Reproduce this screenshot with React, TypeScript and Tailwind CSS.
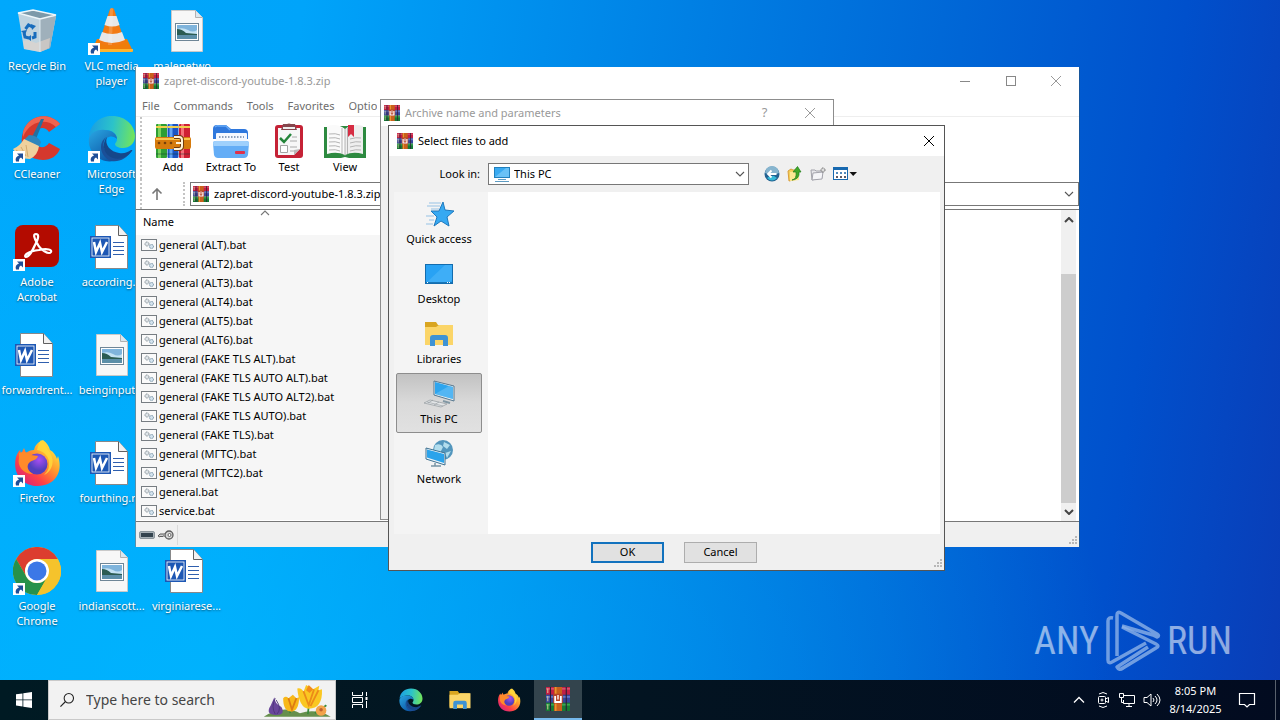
import React from 'react';

type IconProps = { className?: string };

const WinRarIcon: React.FC<IconProps> = ({ className = 'h-4 w-4' }) => (
  <svg viewBox="0 0 16 16" className={className} aria-hidden="true">
    <rect x="0" y="0" width="16" height="5.2" fill="#c21f45" />
    <rect x="0" y="0.6" width="16" height="1.2" fill="#d8506c" />
    <rect x="0" y="5.2" width="16" height="5.3" fill="#37459c" />
    <rect x="0" y="6" width="16" height="1.2" fill="#6076c4" />
    <rect x="0" y="10.5" width="16" height="5.5" fill="#167a35" />
    <rect x="0" y="11.2" width="16" height="1.2" fill="#3ba552" />
    <path d="M3 0v16M13.5 0v16" stroke="#2c1a34" strokeWidth="0.7" />
    <path d="M1.2 1v3M1.2 6v3.5M1.2 11.5V15" stroke="#e9d7a0" strokeWidth="0.6" />
    <rect x="5.3" y="0" width="5.4" height="16" fill="#c9601c" />
    <rect x="6" y="0" width="1" height="16" fill="#e8962f" />
    <rect x="4.8" y="4.500" width="6.4" height="6.500" rx="0.8" fill="#b84326" />
    <path d="M6.1 6v4h3.8V6" fill="none" stroke="#fff" strokeWidth="1.2" />
    <path d="M8 5.4v3" stroke="#fff" strokeWidth="0.9" />
  </svg>
);

const AddIcon = () => (
  <svg viewBox="0 0 36 36" className="h-9 w-9" aria-hidden="true">
    <rect x="1" y="1" width="11" height="34" rx="1" fill="#2e9e35" />
    <rect x="3" y="1" width="3" height="34" fill="#79d35c" />
    <rect x="12.500" y="1" width="11" height="34" rx="1" fill="#1c55c4" />
    <rect x="14.500" y="1" width="3" height="34" fill="#62a4f4" />
    <rect x="24" y="1" width="11" height="34" rx="1" fill="#cf2034" />
    <rect x="26" y="1" width="3" height="34" fill="#f57079" />
    <path d="M1 4h11M12.500 4h11M24 4h11" stroke="#f1cf4d" strokeWidth="2" />
    <path d="M1 31h11M12.500 31h11M24 31h11" stroke="#153b32" strokeWidth="1" opacity=".5" />
    <path d="M0 16q0-2 2-2h32q2 0 2 2v8q0 2-2 2H2q-2 0-2-2z" fill="#d67b0d" />
    <path d="M1 16h34" stroke="#f9c44c" strokeWidth="2" />
    <circle cx="4" cy="20" r="1.300" fill="#75400c" />
    <circle cx="10" cy="20" r="1.300" fill="#75400c" />
    <circle cx="16" cy="20" r="1.300" fill="#75400c" />
    <path d="M19 14h5q3 0 3 3v6q0 3-3 3h-5" fill="none" stroke="#6f3a10" strokeWidth="4" />
    <path d="M19 14h5q3 0 3 3v6q0 3-3 3h-5M21 20h6" fill="none" stroke="#fff2d8" strokeWidth="2" />
  </svg>
);

const ExtractIcon = () => (
  <svg viewBox="0 0 38 36" className="h-9 w-9.5" aria-hidden="true">
    <path d="M1 6q0-4 4-4h9l5 4h13q4 0 4 4v6H1z" fill="#2f78dd" />
    <path d="M3 4q2-2 4-1h7l4 4" stroke="#67a9f5" strokeWidth="1.500" fill="none" />
    <rect x="4" y="10" width="31" height="14" rx="1" fill="#f5f8ff" />
    <path d="M7 14h25" stroke="#8ea0bb" strokeWidth="2" strokeDasharray="1.500 1.500" />
    <path d="M1 20q0-2 3-2h30q3 0 3 2l-1 12q-1 3-4 3H6q-3 0-4-3z" fill="#64adf6" />
    <path d="M1 20q0-2 3-2h30q3 0 3 2l-.4 3H1.500z" fill="#9fd0fc" />
    <rect x="23" y="28" width="10" height="3" rx="1" fill="#e0314a" />
  </svg>
);

const TestIcon = () => (
  <svg viewBox="0 0 30 36" className="h-9 w-7.5" aria-hidden="true">
    <rect x="1" y="2" width="28" height="33" rx="3" fill="#c52236" />
    <path d="M4 5h22v21l-6 6H4z" fill="#f7f7f7" />
    <path d="M7 7h16l-2-6h-4q-2-1-4 0H9z" fill="#86464d" />
    <path d="M9 5h12" stroke="#eee" strokeWidth="2" />
    <path d="M6 15l4 4 7-8" fill="none" stroke="#25853a" strokeWidth="2.500" />
    <path d="M18 14h5M16 18h7M16 24h7M16 28h4" stroke="#aaa" />
    <path d="M6.500 22.500h7v7h-7z" fill="#fff" stroke="#a4a4a4" />
    <path d="M20 32v-5l6-1z" fill="#b9b9b9" />
  </svg>
);

const ViewIcon = () => (
  <svg viewBox="0 0 44 36" className="h-9 w-11" aria-hidden="true">
    <path d="M1 4h5l-1-1h34l-1 1h5v31H26l-4-1-4 1H1z" fill="#2d8a40" />
    <path d="M4 3q11-3 18 3v26q-8-4-18-1z" fill="#fafafa" />
    <path d="M40 3q-11-3-18 3v26q8-4 18-1z" fill="#eee" />
    <path d="M22 6v27M19 5v26M24.500 5v26" stroke="#999" strokeWidth="0.700" />
    <path d="M6 11q7-1 11 1M6 15q7-1 11 1M6 19q7-1 11 1M6 23q7-1 11 1M6 27q7-1 11 1M27 16q6-2 11-1M27 20q6-2 11-1M27 24q6-2 11-1M27 28q6-2 11-1" fill="none" stroke="#b4b4b4" />
    <path d="M25 2h6v12l-3-3-3 3z" fill="#d62d43" />
  </svg>
);

const EdgeIcon: React.FC<IconProps> = ({ className = 'h-12 w-12' }) => (
  <svg viewBox="0 0 48 48" className={className} aria-hidden="true">
    <defs>
      <linearGradient id="edgeTop" x1="0" y1="0.4" x2="1" y2="0.5">
        <stop offset="0" stopColor="#1b9ee2" />
        <stop offset="0.5" stopColor="#2cc3c9" />
        <stop offset="1" stopColor="#72e55a" />
      </linearGradient>
      <linearGradient id="edgeLeft" x1="0" y1="0" x2="0.7" y2="1">
        <stop offset="0" stopColor="#2aa7e3" />
        <stop offset="1" stopColor="#0c55a5" />
      </linearGradient>
    </defs>
    <path d="M1 22C2 9 12 1 24 1c14 0 23 10 23 20 0 8-6 12-12 12-5 0-8-2-8-4 0-1 2-2 2-5 0-5-5-9-11-9C10 15 3 18 1 22z" fill="url(#edgeTop)" />
    <path d="M1 23c2-6 9-9 16-8 7 0 12 4 12 9-2-2-5-3-8-2-9 3-8 18 5 24-14 3-27-9-25-23z" fill="url(#edgeLeft)" />
    <path d="M18 22c-6 8 0 20 12 20 6 0 11-3 14-7-5 9-13 12-20 11-11-3-15-17-6-24z" fill="#1b4f98" />
    <path d="M19 22c-3 8 4 15 12 16 5 1 9-1 12-3 1 0 2 0 1 1-5 7-13 9-19 7-9-3-12-14-6-21z" fill="#164789" />
  </svg>
);

const FirefoxIcon: React.FC<IconProps> = ({ className = 'h-12 w-12' }) => (
  <svg viewBox="0 0 48 48" className={className} aria-hidden="true">
    <defs>
      <linearGradient id="foxBody" x1="0.9" y1="0.1" x2="0.2" y2="0.9">
        <stop offset="0" stopColor="#fff044" />
        <stop offset="0.4" stopColor="#ff9a2d" />
        <stop offset="0.75" stopColor="#ff4245" />
        <stop offset="1" stopColor="#df2873" />
      </linearGradient>
      <radialGradient id="foxGlobe" cx="0.6" cy="0.3">
        <stop offset="0" stopColor="#a94ef2" />
        <stop offset="1" stopColor="#5140bd" />
      </radialGradient>
    </defs>
    <path d="M30 1c4 3 6 6 7 10 4 2 6 6 7 9l1-3c6 18-5 30-20 30C9 47-1 34 3 18c1-3 2-5 4-7l1 4 3-6 2 5c2-2 5-3 8-3 1-5 4-8 9-10z" fill="url(#foxBody)" />
    <circle cx="24" cy="25" r="10.500" fill="url(#foxGlobe)" />
    <path d="M6 14c4-2 9-1 12 2l7 1c-1 4-5 4-8 6-4 3-3 9 3 12-10 0-16-8-14-16z" fill="#ff8a2a" />
    <path d="M24 11c7 1 13 7 12 15 0 5-3 8-5 10 9-4 12-16 4-25-2-4-4-6-7-10-2 3-3 6-4 10z" fill="#ffd93b" opacity=".85" />
  </svg>
);

const ChromeIcon = () => (
  <svg viewBox="0 0 48 48" className="h-12 w-12" aria-hidden="true">
    <circle cx="24" cy="24" r="24" fill="#f5c32c" />
    <path d="M3.200 12A24 24 0 0 1 44.800 12H24a12 12 0 0 0-11 17z" fill="#dc3d2f" />
    <path d="M3.200 12A24 24 0 0 0 24 48l10.400-18A12 12 0 0 1 13.600 30z" fill="#27914b" />
    <path d="M44.800 12A24 24 0 0 1 24 48l10.400-18A12 12 0 0 0 24 12z" fill="#f5c32c" />
    <circle cx="24" cy="24" r="12" fill="#fff" />
    <circle cx="24" cy="24" r="9.500" fill="#3b78e7" />
  </svg>
);

const RecycleIcon = () => (
  <svg viewBox="0 0 48 48" className="h-12 w-12" aria-hidden="true">
    <path d="M5 6l38 3-6 32-10 4-16-3z" fill="#bfd3df" />
    <path d="M27 11l16-2-6 32-10 4z" fill="#9fb0bb" />
    <path d="M5 6l15-3 23 5-16 4z" fill="#7c99a9" stroke="#eef6fa" strokeWidth="1.300" />
    <path d="M10 34l5-1 8 3 14-5-1 10-9 4-16-3z" fill="#e6d5ca" opacity=".6" />
    <path d="M27 12v33" stroke="#dce8ef" strokeWidth="1" />
    <g fill="none" stroke="#176cbc" strokeWidth="3">
      <path d="M12.500 22l3-4 4 2" />
      <path d="M11 26l1 4 4 1" />
      <path d="M19 31l3-1v-5" />
    </g>
    <path d="M18 17l5 2-4 4zM8 24l6-1-2 5zM18 28v6l-4-3z" fill="#176cbc" />
  </svg>
);

const VlcIcon = () => (
  <svg viewBox="0 0 48 48" className="h-12 w-12" aria-hidden="true">
    <path d="M9 32h30l6 12q0 1-2 1H5q-2 0-1-2z" fill="#ef7d0a" />
    <path d="M4 42h41v2q0 1-2 1H5q-2 0-1-2z" fill="#ffb42e" />
    <path d="M22 2q2-2 4 0l11 34q-13 6-26 0z" fill="#f27a13" />
    <path d="M19.500 9h9l3 9q-7 3-15 0zM14 25q10 4 20 0l3 8q-13 6-26 0z" fill="#e7e7e7" />
    <path d="M22 2q2-2 3 0l-1 36h-4z" fill="#fff" opacity=".18" />
  </svg>
);

const CCleanerIcon = () => (
  <svg viewBox="0 0 48 48" className="h-12 w-12" aria-hidden="true">
    <path d="M47 9C36-4 15 0 10 17c-5 16 5 28 20 28 8 0 14-4 17-11l-11-6c-4 7-15 5-15-5 0-11 11-13 15-6z" fill="#d5382d" />
    <path d="M47 9C36-4 15 0 10 17q0 3 0 5C17 5 34 3 43 12z" fill="#f06450" />
    <path d="M28 4h3l-8 20-4-2z" fill="#25709f" />
    <path d="M16 20q8 0 12 7l-2 5-15-7z" fill="#2f86bc" />
    <path d="M11 24l15 7q-1 9-9 13Q6 44 0 34q7-3 11-10z" fill="#efd19d" />
    <path d="M8 32l5 9M13 30l2 12M3 35l7 5" stroke="#ca9f61" strokeWidth="0.800" />
  </svg>
);

const AcrobatIcon = () => (
  <svg viewBox="0 0 48 48" className="h-12 w-12" aria-hidden="true">
    <rect x="2" y="2" width="44" height="42" rx="8" fill="#b30b00" />
    <path d="M13 34c-3-1 2-6 13-7 9-2 13 0 12 2-2 3-11-2-14-9-3-5-4-9-1-9s3 4-1 11c-3 7-7 12-9 12z" fill="none" stroke="#fff" strokeWidth="2.200" />
  </svg>
);

const WordIcon = () => (
  <svg viewBox="2 0 48 48" className="h-12 w-12" aria-hidden="true">
    <path d="M9.500 2.500h23l9 10v33h-32z" fill="#fff" stroke="#87888a" />
    <path d="M32.500 2.500v10h9" fill="#f1f1f1" stroke="#606060" />
    <path d="M27 19.500h11M27 23.500h11M27 27.500h11M27 31.500h11" stroke="#2f5fae" strokeWidth="1.200" />
    <rect x="4" y="13" width="21" height="22" fill="#1d57b4" />
    <rect x="6" y="15" width="17" height="18" fill="none" stroke="#fff" strokeWidth="0.800" />
    <path d="M8 19l2 10 4-9 2 9 5-10" fill="none" stroke="#fff" strokeWidth="2.500" />
  </svg>
);

const PictureIcon = () => (
  <svg viewBox="0 0 48 48" className="h-12 w-12" aria-hidden="true">
    <path d="M8.500 3.500h24l7 7v34h-31z" fill="#f7f7f7" stroke="#c9c9c9" />
    <path d="M32.500 3.500v7h7" fill="#dbe7ef" stroke="#b1b1b1" />
    <rect x="12.500" y="16.500" width="23" height="17" fill="#fff" stroke="#6f8697" />
    <rect x="14" y="18" width="20" height="14" fill="#7fb4dc" />
    <path d="M14 22q6-2 11 1t9 0v4H14z" fill="#c3e2f3" />
    <path d="M14 22q5 0 9 4l11 1v2H14z" fill="#2b5c52" />
    <path d="M14 28h20v4H14z" fill="#5c8fa8" />
  </svg>
);

const ShortcutArrow = () => (
  <svg viewBox="0 0 12 12" className="absolute bottom-0 left-0 h-3 w-3" aria-hidden="true">
    <rect width="12" height="12" fill="#fff" />
    <path d="M3 10.500c-1-3 0-5 3-6L4 2.500h6v6L8 6.500c-2 1-2 2-2 4z" fill="#1f4f98" />
  </svg>
);

type DesktopItem = {
  label: string;
  icon: React.ReactNode;
  place: string;
  shortcut?: boolean;
};

const desktopItems: DesktopItem[] = [
  { label: 'Recycle Bin', icon: <RecycleIcon />, place: 'col-start-1 row-start-1' },
  { label: 'CCleaner', icon: <CCleanerIcon />, place: 'col-start-1 row-start-2', shortcut: true },
  { label: 'Adobe Acrobat', icon: <AcrobatIcon />, place: 'col-start-1 row-start-3', shortcut: true },
  { label: 'forwardrent...', icon: <WordIcon />, place: 'col-start-1 row-start-4' },
  { label: 'Firefox', icon: <FirefoxIcon />, place: 'col-start-1 row-start-5', shortcut: true },
  { label: 'Google Chrome', icon: <ChromeIcon />, place: 'col-start-1 row-start-6', shortcut: true },
  { label: 'VLC media player', icon: <VlcIcon />, place: 'col-start-2 row-start-1', shortcut: true },
  { label: 'Microsoft Edge', icon: <EdgeIcon />, place: 'col-start-2 row-start-2', shortcut: true },
  { label: 'according...', icon: <WordIcon />, place: 'col-start-2 row-start-3' },
  { label: 'beinginput...', icon: <PictureIcon />, place: 'col-start-2 row-start-4' },
  { label: 'fourthing.rtf', icon: <WordIcon />, place: 'col-start-2 row-start-5' },
  { label: 'indianscott...', icon: <PictureIcon />, place: 'col-start-2 row-start-6' },
  { label: 'malenetwo...', icon: <PictureIcon />, place: 'col-start-3 row-start-1' },
  { label: 'virginiarese...', icon: <WordIcon />, place: 'col-start-3 row-start-6' },
];

const Desktop = () => (
  <div className="grid auto-rows-[108px] grid-cols-[74px_75px_75px] pt-[7px]">
    {desktopItems.map((item) => (
      <button key={item.label} className={`flex flex-col items-center justify-start ${item.place}`}>
        <span className="relative">
          {item.icon}
          {item.shortcut && <ShortcutArrow />}
        </span>
        <span className="mt-[3px] w-18 text-center text-[11px] leading-[15px] text-white [text-shadow:0_1px_2px_#0008]">
          {item.label}
        </span>
      </button>
    ))}
  </div>
);

const CloseGlyph = () => (
  <svg viewBox="0 0 12 12" className="h-3 w-3" aria-hidden="true">
    <path d="M1 1l10 10M11 1L1 11" stroke="currentColor" fill="none" />
  </svg>
);

const Chevron: React.FC<IconProps & { up?: boolean; bold?: boolean }> = ({ className = '', up, bold }) => (
  <svg viewBox="0 0 10 6" className={`h-1.5 w-2.5 ${className}`} aria-hidden="true">
    <path
      d={up ? 'M1 5l4-4 4 4' : 'M1 1l4 4 4-4'}
      stroke="currentColor"
      strokeWidth={bold ? 2 : 1.1}
      fill="none"
    />
  </svg>
);

const ResizeGrip = () => (
  <svg viewBox="0 0 9 9" className="h-[9px] w-[9px]" aria-hidden="true">
    <path d="M7 1h2M4 4h2M7 4h2M1 7h2M4 7h2M7 7h2" stroke="#b8b8b8" strokeWidth="2" />
  </svg>
);

const BatIcon = () => (
  <svg viewBox="0 0 16 14" className="h-3.5 w-4 shrink-0" aria-hidden="true">
    <rect x="0.500" y="1.500" width="15" height="11" fill="#fafafa" stroke="#777d82" />
    <path d="M0 1.500h16" stroke="#777d82" />
    <circle cx="6" cy="6" r="2" fill="#dfe5e9" stroke="#7d888f" strokeDasharray="1 .5" />
    <circle cx="10.500" cy="8.500" r="2" fill="#d4e3ee" stroke="#6d8ba0" strokeDasharray="1 .5" />
  </svg>
);

const files = [
  'general (ALT).bat',
  'general (ALT2).bat',
  'general (ALT3).bat',
  'general (ALT4).bat',
  'general (ALT5).bat',
  'general (ALT6).bat',
  'general (FAKE TLS ALT).bat',
  'general (FAKE TLS AUTO ALT).bat',
  'general (FAKE TLS AUTO ALT2).bat',
  'general (FAKE TLS AUTO).bat',
  'general (FAKE TLS).bat',
  'general (МГТС).bat',
  'general (МГТС2).bat',
  'general.bat',
  'service.bat',
];

const tools = [
  { label: 'Add', icon: <AddIcon />, width: 'w-14' },
  { label: 'Extract To', icon: <ExtractIcon />, width: 'w-15' },
  { label: 'Test', icon: <TestIcon />, width: 'w-14' },
  { label: 'View', icon: <ViewIcon />, width: 'w-14' },
];

const ArchiveWindow = () => (
  <section className="absolute top-[67px] left-[135px] flex h-[480px] w-[945px] flex-col border-r border-l border-r-[#17569c] border-l-[#5b8fa8] bg-white text-[11px]">
    <header className="flex h-7 items-center pl-[7px] text-[#999]">
      <WinRarIcon />
      <h1 className="ml-[5px] grow">zapret-discord-youtube-1.8.3.zip</h1>
      <button aria-label="Minimize" className="flex w-[46px] justify-center">
        <span className="h-px w-2.5 bg-[#888]" />
      </button>
      <button aria-label="Maximize" className="flex w-[45px] justify-center">
        <span className="h-2.5 w-2.5 border border-[#888]" />
      </button>
      <button aria-label="Close" className="flex w-[46px] justify-center">
        <CloseGlyph />
      </button>
    </header>
    <nav className="flex h-[22px] items-center gap-3.5 border-b border-[#eee] pt-0.5 pl-1.5 text-[#6d6d6d]">
      <button>File</button>
      <button>Commands</button>
      <button>Tools</button>
      <button>Favorites</button>
      <button className="w-7 overflow-hidden text-left">Options</button>
    </nav>
    <div className="ml-1 flex h-[62px] items-start border-l-2 border-dotted border-[#c4c4c4] pt-1.5 pl-[3px]">
      {tools.map((tool) => (
        <button key={tool.label} className={`flex flex-col items-center ${tool.width}`}>
          {tool.icon}
          <span className="leading-4 whitespace-nowrap">{tool.label}</span>
        </button>
      ))}
    </div>
    <div className="ml-1 flex h-[30px] items-center border-l-2 border-dotted border-[#c4c4c4]">
      <button aria-label="Up one level" className="flex w-[29px] justify-center">
        <svg viewBox="0 0 12 12" className="h-3 w-3" aria-hidden="true">
          <path d="M6 12V1M1.500 5.500L6 1l4.500 4.500" fill="none" stroke="#777" strokeWidth="1.600" />
        </svg>
      </button>
      <span className="ml-3 h-6 border-l-2 border-dotted border-[#c4c4c4]" />
      <label className="ml-[5px] flex h-6 grow items-center border border-[#777] pr-1 pl-0.5">
        <WinRarIcon />
        <input
          aria-label="Address"
          className="ml-[5px] min-w-0 grow outline-none"
          defaultValue="zapret-discord-youtube-1.8.3.zip"
        />
        <Chevron className="text-[#555]" />
      </label>
    </div>
    <div className="flex min-h-0 grow border-t border-b border-[#777]">
      <table className="w-[258px] self-start text-left">
        <thead>
          <tr className="h-[25px]">
            <th className="relative pl-[7px] font-normal">
              Name
              <Chevron up className="absolute top-0 left-[124px] text-[#777]" />
            </th>
          </tr>
        </thead>
        <tbody>
          {files.map((file) => (
            <tr key={file} className="h-[19px] bg-[#f6f6f6]">
              <td className="p-0 pl-[5px]">
                <span className="flex items-center gap-0.5 leading-[19px]">
                  <BatIcon />
                  {file}
                </span>
              </td>
            </tr>
          ))}
        </tbody>
      </table>
      <div className="mr-[3px] ml-auto flex w-[15px] flex-col items-center bg-[#f0f0f0]">
        <Chevron up bold className="my-[7px] text-[#444]" />
        <div className="h-11 w-full" />
        <div className="w-full grow bg-[#cdcdcd]" />
        <Chevron bold className="my-1.5 text-[#444]" />
      </div>
    </div>
    <footer className="flex h-[25px] items-center gap-[3px] bg-[#f0f0f0] pl-[3px]">
      <svg viewBox="0 0 16 8" className="h-2 w-4" aria-hidden="true">
        <rect x="0.500" y="0.500" width="15" height="7" rx="1.500" fill="#a7b0b6" stroke="#8c969c" />
        <rect x="2" y="2" width="12" height="4" fill="#34444f" />
      </svg>
      <svg viewBox="0 0 16 10" className="h-2.5 w-4" aria-hidden="true">
        <circle cx="11" cy="5" r="4" fill="#d6d6d6" stroke="#5d5d5d" strokeWidth="1.300" />
        <circle cx="11.500" cy="5" r="1.500" fill="#fff" stroke="#666" />
        <path d="M7 4H2L0 6l2 1 1-1 1 1 1-1h2" fill="#ccc" stroke="#5d5d5d" />
      </svg>
      <span className="h-5 w-px bg-[#dadada]" />
      <span className="mr-0.5 ml-auto self-end pb-0.5">
        <ResizeGrip />
      </span>
    </footer>
  </section>
);

const ParametersWindow = () => (
  <section className="absolute top-[99px] left-[380px] h-[421px] w-[454px] border border-[#8d8d8d] bg-[#f0f0f0] text-[11px]">
    <header className="flex h-[26px] items-center bg-white pl-[3px] text-[#999]">
      <WinRarIcon />
      <h2 className="ml-[5px] grow">Archive name and parameters</h2>
      <button aria-label="Help" className="w-[45px] text-[13px]">?</button>
      <button aria-label="Close" className="flex w-[46px] justify-center">
        <CloseGlyph />
      </button>
    </header>
  </section>
);

const QuickAccessIcon = () => (
  <svg viewBox="0 0 32 28" className="h-7 w-8" aria-hidden="true">
    <path d="M20 2l2 8 9 1-7 6 2 9-8-5-7 5 3-9-6-6h8z" fill="#36a9f2" stroke="#1d78bd" />
    <path d="M6 3h12M4 6h13M8 9h8M3 16h8M6 20h5M3 24h7" stroke="#6daede" strokeWidth="0.700" />
  </svg>
);

const DesktopIcon = () => (
  <svg viewBox="0 0 32 28" className="h-7 w-8" aria-hidden="true">
    <rect x="2.500" y="4.500" width="27" height="19" fill="#28a2f4" stroke="#136cae" />
    <path d="M3 23L22 5h7v15l-4 3z" fill="#54b9fa" opacity=".5" />
    <path d="M3 22.500h26" stroke="#1776b9" />
    <path d="M4 22.500h2M24 22.500h4" stroke="#fff" strokeDasharray="1 1" />
  </svg>
);

const FolderIcon: React.FC<IconProps> = ({ className = 'h-7 w-8' }) => (
  <svg viewBox="0 0 32 28" className={className} aria-hidden="true">
    <path d="M2 2h11l2 3h14v18H2z" fill="#d9a520" />
    <path d="M2 7h11l3-2h14v20H2z" fill="#fbd568" />
    <path d="M7 26v-8q0-3 3-3h12q3 0 3 3v8h-5v-6h-8v6z" fill="#3e93d4" />
  </svg>
);

const ThisPcIcon = () => (
  <svg viewBox="0 0 32 28" className="h-7 w-8" aria-hidden="true">
    <path d="M11 1l20 5v15l-20-6z" fill="#e8eef2" stroke="#57788f" />
    <path d="M12 2l18 5v12l-18-5z" fill="#2ea5ee" />
    <path d="M12 14L26 6l4 1v12z" fill="#78c8f8" opacity=".5" />
    <path d="M1 23l6-3 17 4-6 3z" fill="#e2e5e7" stroke="#92999e" strokeWidth="0.700" />
    <path d="M4 22l16 4M10 20l-5 3M16 22l-5 3" stroke="#92999e" strokeWidth="0.600" />
    <path d="M20 21l7 2" stroke="#8298a4" strokeWidth="2" />
  </svg>
);

const NetworkIcon = () => (
  <svg viewBox="0 0 32 28" className="h-7 w-8" aria-hidden="true">
    <circle cx="20" cy="10" r="10" fill="#5396bd" />
    <path d="M12 5q6-2 8 2l-3 6-6-3zM21 2l6 3-3 4-4-3zM22 13l6-2-4 7z" fill="#b2dded" />
    <path d="M3 8l19 5v12L3 19z" fill="#edf4f8" stroke="#3d7191" />
    <path d="M4 9.500l17 4.500v9L4 17.500z" fill="#2ba3eb" />
    <path d="M12 23v3M8 26h10" stroke="#7794a4" strokeWidth="1.500" />
  </svg>
);

const places = [
  { label: 'Quick access', icon: <QuickAccessIcon /> },
  { label: 'Desktop', icon: <DesktopIcon /> },
  { label: 'Libraries', icon: <FolderIcon /> },
  { label: 'This PC', icon: <ThisPcIcon />, selected: true },
  { label: 'Network', icon: <NetworkIcon /> },
];

const SelectDialog = () => (
  <section
    role="dialog"
    aria-label="Select files to add"
    className="absolute top-[125px] left-[388px] flex h-[446px] w-[557px] flex-col border border-[#555] bg-[#f0f0f0] text-[11px]"
  >
    <header className="flex h-[30px] items-center bg-white pl-2">
      <WinRarIcon />
      <h2 className="ml-[5px] grow">Select files to add</h2>
      <button aria-label="Close" className="flex w-[30px] justify-center">
        <CloseGlyph />
      </button>
    </header>
    <div className="flex h-9 items-center">
      <label htmlFor="look-in" className="w-[91px] text-right">Look in:</label>
      <div className="ml-2 flex h-[22px] w-[261px] items-center border border-[#777] bg-white pr-[3px] pl-[5px]">
        <svg viewBox="0 0 16 16" className="h-4 w-4" aria-hidden="true">
          <rect x="0.500" y="1.500" width="15" height="10" fill="#39aaf1" stroke="#2180bd" />
          <path d="M1 11L12 2h3v9z" fill="#8ad0fa" opacity=".6" />
          <path d="M4 13.500h8M1 15.500h14" stroke="#5e9cc3" />
        </svg>
        <select id="look-in" className="ml-1 grow appearance-none outline-none">
          <option>This PC</option>
        </select>
        <Chevron className="text-[#555]" />
      </div>
      <div className="ml-[15px] flex items-center gap-[7px]">
        <button aria-label="Back">
          <svg viewBox="0 0 16 16" className="h-4 w-4" aria-hidden="true">
            <circle cx="8" cy="8" r="7.500" fill="#246291" />
            <path d="M1 7a7 7 0 0 1 14 0q-7 3-14 0z" fill="#87b5cf" />
            <path d="M3 12q5 5 10 0l-3-2H6z" fill="#36b9d8" />
            <path d="M12.500 8H4M7.500 4.500L4 8l3.500 3.500" fill="none" stroke="#fff" strokeWidth="1.800" />
          </svg>
        </button>
        <button aria-label="Up one level">
          <svg viewBox="0 0 16 16" className="h-4 w-4" aria-hidden="true">
            <path d="M1 5l3-2 2 1h5v9l-9 2z" fill="#f3cf59" stroke="#d99e3c" />
            <path d="M3 6l9-1v9l-9 1z" fill="#fce994" />
            <path d="M5 14q5-1 4-8H6l4.500-5.500L14 6h-2q1 7-7 8z" fill="#42a82a" stroke="#207e19" strokeWidth="0.700" />
          </svg>
        </button>
        <button aria-label="Create new folder">
          <svg viewBox="0 0 16 16" className="h-4 w-4" aria-hidden="true">
            <path d="M1 4h4l1 1h6v7l-10 2z" fill="#e7e7eb" stroke="#a3a3ab" />
            <path d="M3 7l10-1-1 7-10 1z" fill="#f5f5f8" stroke="#a4a4ac" />
            <circle cx="13" cy="4" r="2" fill="#ddd" stroke="#666" strokeDasharray="1 .5" />
          </svg>
        </button>
        <button aria-label="View menu" className="flex items-center">
          <svg viewBox="0 0 24 16" className="h-4 w-6" aria-hidden="true">
            <rect x="0.500" y="1.500" width="14" height="12" fill="#fff" stroke="#1769b0" />
            <path d="M0 2.500h15" stroke="#1769b0" strokeWidth="3" />
            <path d="M3 7h2M7 7h2M11 7h2" stroke="#5289bb" strokeWidth="2" />
            <path d="M3 11h2M7 11h2M11 11h2" stroke="#5d5964" strokeWidth="2" />
            <path d="M16.500 6h7.500l-3.800 4z" fill="#111" />
          </svg>
        </button>
      </div>
    </div>
    <div className="flex min-h-0 grow pr-1 pl-[5px]">
      <div className="flex w-[94px] shrink-0 flex-col bg-[#f4f4f4] pt-px pl-0.5">
        {places.map((place) => (
          <button
            key={place.label}
            className={`flex h-15 w-[86px] flex-col items-center rounded-xs border pt-1.5 ${
              place.selected
                ? 'border-[#8d8d8d] bg-linear-to-b from-[#c2c2c2] via-[#dadada] to-[#e1e1e1]'
                : 'border-transparent'
            }`}
          >
            {place.icon}
            <span className="mt-[3px] leading-4">{place.label}</span>
          </button>
        ))}
      </div>
      <div className="grow bg-white" />
    </div>
    <footer className="flex h-9 gap-5 pt-2 pl-[202px]">
      <button className="h-[21px] w-[73px] border-2 border-[#1272be] bg-[#e1e1e1]">OK</button>
      <button className="h-[21px] w-[73px] border border-[#adadad] bg-[#e1e1e1]">Cancel</button>
      <span className="mr-0.5 ml-auto self-end pb-0.5">
        <ResizeGrip />
      </span>
    </footer>
  </section>
);

const Watermark = () => (
  <div className="absolute right-12 bottom-2 flex items-center gap-1.5 font-['Roboto_Condensed','Liberation_Sans_Narrow','Liberation_Sans',sans-serif] text-[38px] leading-none text-white/55">
    <span>ANY</span>
    <svg viewBox="0 0 56 62" className="h-[62px] w-14" fill="none" stroke="#8cb2e7" strokeOpacity=".8" strokeWidth="3.500" strokeLinejoin="round" aria-hidden="true">
      <path d="M8 8q-5-1-5 3v39q0 4 4 2l34-19" />
      <path d="M12 46V5q0-4 4-2l36 21q3 2 0 3l-4-2L17 16" />
      <path d="M17 17l34 17q4 2 0 4L18 58q-4 3-6-1l31-20" />
    </svg>
    <span>RUN</span>
  </div>
);

const SearchArt = () => (
  <svg viewBox="0 0 80 39" className="mr-0.5 h-[39px] w-20 self-end" aria-hidden="true">
    <path d="M2 39q22-14 41-4 18-6 35 4z" fill="#668f4c" />
    <path d="M32 35l-2-12M52 36l2-18M60 35l13-9" stroke="#398a3b" strokeWidth="2" />
    <path d="M14 17q0 7 8 11 5 9-6 9-13 0-6-11z" fill="#69469b" />
    <path d="M15 18q-5 10 0 18M16 20q7 10 1 16" stroke="#4a3379" fill="none" />
    <path d="M24 18q3-3 6 0l5-4 4 4 3-1q0 16-9 16T24 18z" fill="#f8b819" />
    <path d="M30 18l4 13 5-13" stroke="#dd7b13" strokeWidth="2" fill="none" />
    <path d="M40 7q5-1 7 4l3-8 8 5 7-4-1 5 4-1q1 22-15 22Q42 29 40 7z" fill="#fac722" />
    <path d="M47 10l6 16 6-18M64 9l-9 18" stroke="#ec8b19" strokeWidth="2" fill="none" />
    <path d="M50 9l3-6 5 5-4 4z" fill="#f28b19" />
    <circle cx="67" cy="32" r="6" fill="#f2a34b" />
    <circle cx="67" cy="31" r="2" fill="#bd6030" />
  </svg>
);

const Taskbar = () => (
  <footer className="relative flex h-10 shrink-0 items-stretch bg-linear-to-r from-[#001a23] via-[#031421] to-[#020b20] text-white">
    <button aria-label="Start" className="flex w-12 items-center justify-center">
      <svg viewBox="0 0 16 16" className="h-4 w-4" aria-hidden="true">
        <path d="M0 2.300l6.500-.9v6.100H0zM7.300 1.300L16 0v7.500H7.300zM0 8.300h6.500v6.200L0 13.600zM7.300 8.300H16V16l-8.700-1.300z" fill="#fff" />
      </svg>
    </button>
    <label className="flex w-72 items-center border border-[#c9c9c9] bg-[#f2f2f2] pl-[11px]">
      <svg viewBox="0 0 16 16" className="h-4 w-4" aria-hidden="true">
        <circle cx="10" cy="6" r="5.300" fill="none" stroke="#222" strokeWidth="1.200" />
        <path d="M6 10l-5.500 5.500" stroke="#222" strokeWidth="1.300" />
      </svg>
      <input aria-label="Search" placeholder="Type here to search" className="ml-3 min-w-0 grow text-sm outline-none placeholder:text-[#454545]" />
      <SearchArt />
    </label>
    <button aria-label="Task view" className="mr-[3px] flex w-12 items-center justify-center">
      <svg viewBox="0 0 16 16" className="h-4 w-4" fill="none" stroke="#fff" aria-hidden="true">
        <path d="M.5 0v3.500h10V0M.5 16v-3.500h10V16M.5 5.500h10v5H.5zM14.500 0v4M14.500 9v7" />
        <path d="M13.500 6.500h2" strokeWidth="3" />
      </svg>
    </button>
    <div className="flex gap-px">
      <button aria-label="Microsoft Edge" className="flex w-12 items-center justify-center">
        <EdgeIcon className="h-6 w-6" />
      </button>
      <button aria-label="File Explorer" className="flex w-12 items-center justify-center">
        <FolderIcon className="h-6 w-6" />
      </button>
      <button aria-label="Firefox" className="flex w-12 items-center justify-center">
        <FirefoxIcon className="h-6 w-6" />
      </button>
      <button aria-label="WinRAR" className="flex w-12 items-center justify-center border-b-2 border-[#76b9ed] bg-[#33444d]">
        <WinRarIcon className="h-6 w-6" />
      </button>
    </div>
    <div className="ml-auto flex items-center gap-2">
      <button aria-label="Show hidden icons" className="flex w-4 justify-center">
        <svg viewBox="0 0 12 8" className="h-2 w-3" fill="none" stroke="#fff" strokeWidth="1.300" aria-hidden="true">
          <path d="M1 6.500l5-5 5 5" />
        </svg>
      </button>
      <svg viewBox="0 0 16 16" className="h-4 w-4" fill="none" stroke="#fff" aria-hidden="true">
        <path d="M4 2q4-3 8 0M4 14q4 3 8 0" />
        <rect x="3.500" y="4.500" width="7" height="7" rx="1" />
        <path d="M10.500 7l3-1.500v5L10.500 9" />
        <circle cx="7" cy="8" r="1" />
      </svg>
      <svg viewBox="0 0 16 16" className="h-4 w-4" fill="none" stroke="#fff" aria-hidden="true">
        <path d="M5 3.500h10.500v8H4.500V8M10 11.500v3M7 14.500h6" />
        <path d="M.5 1.500h4v4h-4zM2.500 5.500v5H5" />
      </svg>
      <svg viewBox="0 0 18 16" className="h-4 w-4.5" fill="none" stroke="#fff" aria-hidden="true">
        <path d="M1 5.500h3l4-3.500v12l-4-3.500H1zM10 6q2 2 0 4M12 4q4 4 0 8M14 2q6 6 0 12" />
      </svg>
    </div>
    <time className="flex w-[69px] flex-col justify-center text-center text-[11px] leading-[18px]">
      <span>8:05 PM</span>
      <span>8/14/2025</span>
    </time>
    <button aria-label="Notifications" className="mr-[19px] ml-2 flex w-[18px] items-center justify-center">
      <svg viewBox="0 0 18 18" className="h-[18px] w-[18px]" fill="none" stroke="#fff" strokeWidth="1.200" aria-hidden="true">
        <path d="M1.500 2.500h15v11h-5L9 16l-2.500-2.500h-5z" />
      </svg>
    </button>
    <span className="mr-1 w-px bg-[#59616d]" />
  </footer>
);

export default function App() {
  return (
    <main className="relative flex h-screen flex-col overflow-hidden bg-[linear-gradient(98deg,#00a8fc_0%,#00a4fa_22%,#0080e4_50%,#0066d6_70%,#0050cc_86%,#0a3cb6_100%)] font-['Noto_Sans','Open_Sans',sans-serif] text-black">
      <div className="relative min-h-0 grow bg-[radial-gradient(ellipse_at_15%_100%,#00b8ffb0_0%,#00b8ff00_60%)]">
        <Desktop />
        <Watermark />
        <ArchiveWindow />
        <ParametersWindow />
        <SelectDialog />
      </div>
      <Taskbar />
    </main>
  );
}
